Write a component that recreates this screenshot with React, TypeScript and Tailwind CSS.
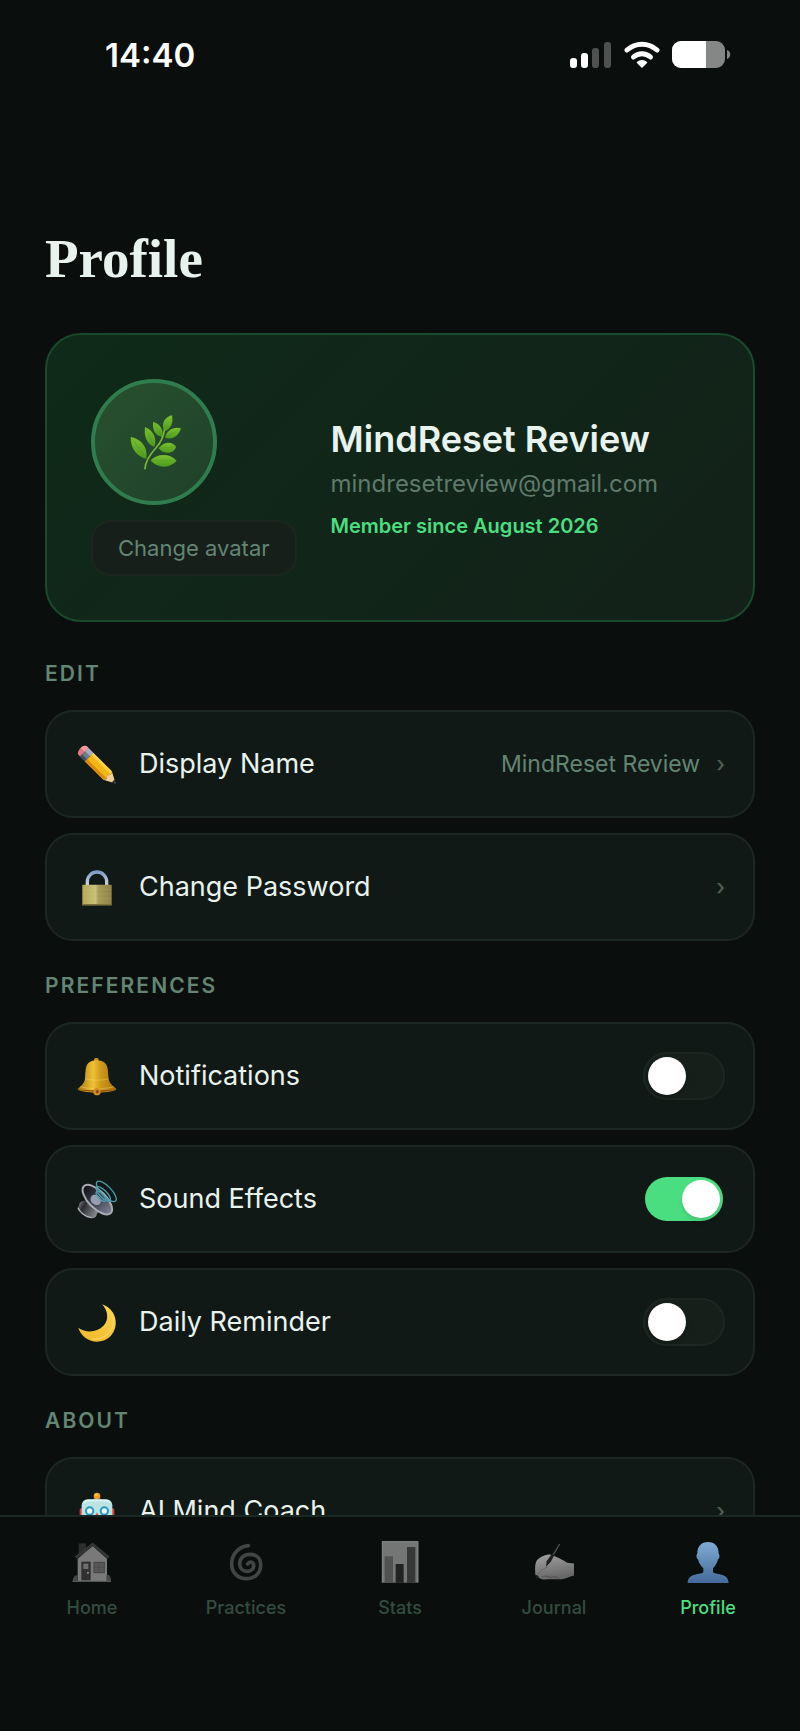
import { useState, type ReactNode } from 'react'

function StatusBar() {
  return (
    <header className="flex h-[109px] items-center justify-between pl-[105px] pr-[69px]">
      <time className="text-[33px] font-semibold leading-10 text-white">14:40</time>
      <div className="flex items-center gap-3">
        <svg className="h-7 w-[42px]" viewBox="0 0 42 28" fill="#fff" aria-label="Signal">
          <rect x="0" y="17" width="7" height="10" rx="3" />
          <rect x="11" y="12" width="7" height="15" rx="3" />
          <rect x="22" y="7" width="7" height="20" rx="3" opacity="0.28" />
          <rect x="34" y="1" width="7" height="26" rx="3" opacity="0.28" />
        </svg>
        <svg className="h-7 w-9" viewBox="0 0 36 28" fill="none" stroke="#fff" strokeLinecap="round" aria-label="Wi-Fi">
          <path d="M3 9C11.500 1.200 24.500 1.200 33 9" strokeWidth="5" />
          <path d="M9.500 16C14.500 11.500 21.500 11.500 26.500 16" strokeWidth="5" />
          <path d="M18 26L13.500 21.500C16 19 20 19 22.500 21.500Z" fill="#fff" strokeWidth="1.500" strokeLinejoin="round" />
        </svg>
        <svg className="h-7 w-[59px]" viewBox="0 0 59 28" aria-label="Battery">
          <clipPath id="battery">
            <rect x="0" y="0" width="53" height="27" rx="9" />
          </clipPath>
          <g clipPath="url(#battery)">
            <rect width="53" height="27" fill="#858786" />
            <rect width="34" height="27" fill="#fff" />
          </g>
          <path d="M55 9C59.300 10 59.300 17 55 18Z" fill="#858786" />
        </svg>
      </div>
    </header>
  )
}

function HerbIcon() {
  return (
    <svg className="ml-1 h-14 w-[52px]" viewBox="0 0 156 166" aria-hidden="true">
      <defs>
        <linearGradient id="leaf" x1="0" y1="0" x2="0" y2="1">
          <stop offset="0" stopColor="#7cc22f" />
          <stop offset="1" stopColor="#4b9a1d" />
        </linearGradient>
      </defs>
      <g fill="url(#leaf)">
        <path d="M2 68C25 72 55 90 49 134C20 125 2 105 2 68Z" />
        <path d="M45 38C70 48 82 72 73 98C48 88 42 65 45 38Z" />
        <path d="M70 22C92 30 102 48 96 67C72 62 66 42 70 22Z" />
        <path d="M126 3C104 8 92 28 103 52C126 42 130 22 126 3Z" />
        <path d="M153 42C130 36 110 48 105 70C128 78 145 66 153 42Z" />
        <path d="M138 98C130 82 104 78 86 102C100 120 130 122 138 98Z" />
        <path d="M140 139C118 115 80 118 62 138C80 160 115 166 140 139Z" />
      </g>
      <path d="M45 163C46 140 60 120 80 98C92 84 100 70 103 48" fill="none" stroke="#79b83c" strokeWidth="5" strokeLinecap="round" />
      <path d="M6 72L48 132M47 42L72 94M72 26L95 64M64 138H132M88 102L132 98M108 68L148 45" stroke="#478f20" strokeWidth="1.500" opacity="0.6" />
    </svg>
  )
}

function PencilIcon() {
  return (
    <svg className="size-10" viewBox="0 0 120 120" aria-hidden="true">
      <g transform="translate(19 22) rotate(45)">
        <path d="M4 -18H-2C-16 -18 -16 18 -2 18H4Z" fill="#e8757f" />
        <path d="M4 -18H-2C-10 -18 -13 -8 -13 -2H4Z" fill="#f59aa2" />
        <rect x="4" y="-18" width="21" height="36" fill="#6f7d8c" />
        <rect x="4" y="-18" width="21" height="14" fill="#a3b0bd" />
        <rect x="4" y="9" width="21" height="9" fill="#454f5a" />
        <path d="M25 -18H103L108 -9L101 0L108 9L103 18H25Z" fill="#f3b614" />
        <path d="M25 -18H103L107 -9H25Z" fill="#fbd04b" />
        <path d="M25 8H107L103 18H25Z" fill="#d88a0c" />
        <path d="M103 -18L137 0L103 18L108 9L101 0L108 -9Z" fill="#f1cf98" />
        <path d="M126 -6L139 0L126 6Z" fill="#2e3338" />
      </g>
    </svg>
  )
}

function LockIcon() {
  return (
    <svg className="size-10" viewBox="0 0 120 120" aria-hidden="true">
      <defs>
        <linearGradient id="brass" x1="0" y1="0" x2="1" y2="0">
          <stop offset="0" stopColor="#b3a858" />
          <stop offset="0.450" stopColor="#c9c07a" />
          <stop offset="0.550" stopColor="#a59a58" />
          <stop offset="1" stopColor="#8f8444" />
        </linearGradient>
        <linearGradient id="shackle" x1="0" y1="0" x2="0" y2="1">
          <stop offset="0" stopColor="#7f9cc9" />
          <stop offset="1" stopColor="#d6dbe0" />
        </linearGradient>
      </defs>
      <path d="M31 57V44A29 29 0 0 1 89 44V57" fill="none" stroke="url(#shackle)" strokeWidth="10" />
      <rect x="16" y="53" width="88" height="62" rx="2" fill="url(#brass)" />
      <path d="M16 67H104M16 81H104M16 95H104" stroke="#ddd48c" strokeWidth="2" opacity="0.2" />
      <path d="M16 113H104" stroke="#7d7236" strokeWidth="4" />
    </svg>
  )
}

function BellIcon() {
  return (
    <svg className="size-10" viewBox="0 0 120 120" aria-hidden="true">
      <defs>
        <linearGradient id="gold" x1="0" y1="0" x2="1" y2="0">
          <stop offset="0" stopColor="#a9730d" />
          <stop offset="0.400" stopColor="#efc236" />
          <stop offset="0.600" stopColor="#cf981b" />
          <stop offset="1" stopColor="#a9720c" />
        </linearGradient>
      </defs>
      <rect x="51" y="6" width="14" height="12" rx="5" fill="#c9921c" />
      <path d="M24 68C27 40 22 14 59 13C96 14 92 40 95 68C97 84 110 90 118 99C118 105 90 110 60 110C30 110 2 105 2 99C10 90 22 84 24 68Z" fill="url(#gold)" />
      <path d="M25 68C40 74 79 74 94 68M9 92C35 100 85 100 111 92" fill="none" stroke="#f8dc6a" strokeWidth="3" opacity="0.4" />
      <path d="M3 100C30 111 90 111 117 100C100 102 80 103 60 103C40 103 20 102 3 100Z" fill="#93580b" />
      <circle cx="60" cy="107" r="11" fill="#d68b26" />
      <circle cx="61" cy="107" r="5" fill="#8d4d12" />
    </svg>
  )
}

function SpeakerIcon() {
  return (
    <svg className="size-10" viewBox="0 0 120 120" aria-hidden="true">
      <defs>
        <linearGradient id="magnet" x1="0" y1="0" x2="1" y2="0.500">
          <stop offset="0" stopColor="#8e9196" />
          <stop offset="0.350" stopColor="#2a2c30" />
          <stop offset="1" stopColor="#85888d" />
        </linearGradient>
        <linearGradient id="cone" x1="0" y1="0" x2="1" y2="0">
          <stop offset="0" stopColor="#0e1014" />
          <stop offset="0.450" stopColor="#3a3d47" />
          <stop offset="1" stopColor="#7d8294" />
        </linearGradient>
      </defs>
      <path d="M8 72C16 62 28 64 36 70L66 98C56 104 62 112 52 116C36 124 6 104 2 90Z" fill="url(#magnet)" />
      <path d="M3 86C8 99 24 113 44 116" fill="none" stroke="#b0b3b8" strokeWidth="4" />
      <path d="M20 40L32 82L72 104Z" fill="#4c4f55" />
      <g transform="rotate(45 61 62)">
        <ellipse cx="61" cy="62" rx="57" ry="26" fill="url(#cone)" stroke="#a9acb3" strokeWidth="6" />
        <ellipse cx="58" cy="66" rx="17" ry="14" fill="#989eb0" />
      </g>
      <g fill="none" stroke="#4c9cae" strokeWidth="4">
        <ellipse cx="88" cy="37" rx="40" ry="15" transform="rotate(46 88 37)" />
        <ellipse cx="79" cy="45" rx="29" ry="11" transform="rotate(46 79 45)" />
        <ellipse cx="72" cy="52" rx="19" ry="8" transform="rotate(46 72 52)" />
      </g>
    </svg>
  )
}

function MoonIcon() {
  return (
    <svg className="size-10" viewBox="0 0 120 124" aria-hidden="true">
      <defs>
        <linearGradient id="moon" x1="0.700" y1="0" x2="0.300" y2="1">
          <stop offset="0" stopColor="#fbd64c" />
          <stop offset="1" stopColor="#f2b92d" />
        </linearGradient>
      </defs>
      <path d="M76 7C105 17 120 42 118 70C115 102 90 123 60 123C35 123 10 107 2 80C28 98 60 94 80 74C98 56 94 26 76 7Z" fill="url(#moon)" />
      <path d="M112 52C114 92 80 119 44 114" fill="none" stroke="#fde58a" strokeWidth="4" opacity="0.5" />
    </svg>
  )
}

function RobotIcon() {
  return (
    <svg className="size-10" viewBox="0 0 120 120" aria-hidden="true">
      <rect x="8" y="52" width="12" height="30" rx="5" fill="#d8413b" />
      <rect x="100" y="52" width="12" height="30" rx="5" fill="#d8413b" />
      <path d="M48 22H72L69 30H51Z" fill="#5d4a8c" />
      <circle cx="60" cy="15" r="10" fill="#f39a1f" />
      <circle cx="58" cy="12" r="4" fill="#fcc65a" />
      <rect x="14" y="25" width="92" height="90" rx="18" fill="#b9e4e2" />
      <path d="M20 36C24 28 32 28 60 28S96 28 100 36" fill="none" stroke="#def5f2" strokeWidth="5" />
      <circle cx="38" cy="60" r="14" fill="#2a96c6" />
      <circle cx="82" cy="60" r="14" fill="#2a96c6" />
      <circle cx="38" cy="60" r="8" fill="#e9fbff" />
      <circle cx="82" cy="60" r="8" fill="#e9fbff" />
      <path d="M60 64L68 80H52Z" fill="#e0504a" />
      <rect x="34" y="90" width="52" height="12" rx="4" fill="#4b5a63" />
    </svg>
  )
}

function HouseIcon() {
  return (
    <svg className="size-10" viewBox="0 0 120 120" aria-hidden="true">
      <rect x="20" y="4" width="22" height="34" fill="#2c2e2e" />
      <path d="M17 50L62 12L105 50V118H17Z" fill="#797979" />
      <path d="M11 47L62 7L110 47" fill="none" stroke="#343636" strokeWidth="9" />
      <rect x="28" y="59" width="28" height="56" fill="#303030" />
      <rect x="34" y="65" width="15" height="16" fill="#707070" />
      <circle cx="48" cy="92" r="3" fill="#999" />
      <rect x="66" y="61" width="31" height="31" fill="#585858" stroke="#444" strokeWidth="3" />
      <path d="M81 61V92M66 76H97" stroke="#484848" strokeWidth="2" />
      <path d="M2 119C2 108 8 98 17 100V119ZM103 119V98C112 96 118 106 117 119Z" fill="#464848" />
      <path d="M2 118H117" stroke="#606060" strokeWidth="3" />
    </svg>
  )
}

function SpiralIcon() {
  return (
    <svg className="size-10" viewBox="0 0 120 120" aria-hidden="true">
      <path
        d="M67 11C38 14 17 36 17 66C17 94 38 110 62 110C88 110 104 92 104 68C104 48 90 37 72 37C52 37 41 50 41 66C41 80 52 88 64 88C76 88 84 80 83 69C82 60 71 57 65 66"
        fill="none"
        stroke="#434544"
        strokeWidth="11"
        strokeLinecap="round"
      />
    </svg>
  )
}

function ChartIcon() {
  return (
    <svg className="size-[42px]" viewBox="0 0 126 126" aria-hidden="true">
      <rect x="9" y="1" width="108" height="124" fill="#747675" />
      <path d="M10 1V125M117 1V125M9 2H117" stroke="#868887" strokeWidth="3" />
      <rect x="17" y="46" width="25" height="79" fill="#505251" />
      <rect x="50" y="69" width="24" height="56" fill="#202322" />
      <rect x="84" y="18" width="25" height="107" fill="#353837" />
    </svg>
  )
}

function WritingHandIcon() {
  return (
    <svg className="size-10" viewBox="0 0 120 120" aria-hidden="true">
      <defs>
        <linearGradient id="hand" x1="0" y1="0" x2="0.300" y2="1">
          <stop offset="0" stopColor="#a2a2a2" />
          <stop offset="1" stopColor="#686868" />
        </linearGradient>
      </defs>
      <path
        d="M4 98C3 84 2 66 8 56C18 44 38 36 50 38C64 42 88 54 100 62L121 65V100C106 104 94 110 82 112L40 112C28 114 16 110 12 104Z"
        fill="url(#hand)"
      />
      <path d="M12 96C18 86 30 82 40 74" fill="none" stroke="#666" strokeWidth="3" />
      <path d="M24 106C34 100 44 103 50 107C58 101 66 104 74 109" fill="none" stroke="#505050" strokeWidth="3" />
      <path d="M75 5L79 7L50 60L36 74L38 58Z" fill="#202222" />
      <path d="M77 6L58 38" stroke="#777" strokeWidth="2" />
      <path d="M4 98L14 102L8 116Z" fill="#1b1d1c" />
    </svg>
  )
}

function PersonIcon() {
  return (
    <svg className="size-[42px]" viewBox="0 0 126 126" aria-hidden="true">
      <defs>
        <linearGradient id="person" x1="0" y1="0" x2="0" y2="1">
          <stop offset="0" stopColor="#7eabd3" />
          <stop offset="1" stopColor="#446a9a" />
        </linearGradient>
      </defs>
      <path
        d="M63 3C83 3 96 17 95 38C99 41 98 52 93 55C90 68 84 76 78 82V92C82 104 124 92 125 126H2C3 92 45 104 49 92V82C42 76 36 68 33 55C28 52 27 41 31 38C30 17 43 3 63 3Z"
        fill="url(#person)"
      />
    </svg>
  )
}

const rowClass =
  'flex h-[108px] w-full items-center rounded-[28px] border-2 border-[#1c2623] bg-[#111916] pl-[30px] pr-7 text-left'

function RowLabel({ icon, label }: { icon: ReactNode; label: string }) {
  return (
    <>
      {icon}
      <span className="ml-[22px] flex-1 text-[27px] leading-9 text-[#e8f3ed]">{label}</span>
    </>
  )
}

function LinkRow({ icon, label, value }: { icon: ReactNode; label: string; value?: string }) {
  return (
    <button type="button" className={rowClass}>
      <RowLabel icon={icon} label={label} />
      {value && <span className="text-[23px] leading-8 text-[#648573]">{value}</span>}
      <span className="ml-4 text-[22px] font-medium leading-8 text-[#4d5f55]" aria-hidden="true">
        ›
      </span>
    </button>
  )
}

function ToggleRow({ icon, label, initial = false }: { icon: ReactNode; label: string; initial?: boolean }) {
  const [on, setOn] = useState(initial)
  return (
    <label className={rowClass}>
      <RowLabel icon={icon} label={label} />
      <input
        type="checkbox"
        role="switch"
        checked={on}
        onChange={(e) => setOn(e.target.checked)}
        className="flex h-12 w-[82px] shrink-0 appearance-none items-center rounded-full border-2 border-[#1d2721] bg-[#161f19] bg-clip-padding px-[3px] before:size-[38px] before:rounded-full before:bg-white before:shadow-md before:content-[''] checked:justify-end checked:border-transparent checked:bg-[#4ade80]"
      />
    </label>
  )
}

function Section({ title, children }: { title: string; children: ReactNode }) {
  return (
    <section className="mt-[31px]">
      <h2 className="mb-[22px] text-[21px] font-semibold uppercase leading-7 tracking-widest text-[#648573]">{title}</h2>
      <div className="flex flex-col gap-[15px]">{children}</div>
    </section>
  )
}

const tabs = [
  { label: 'Home', icon: <HouseIcon /> },
  { label: 'Practices', icon: <SpiralIcon /> },
  { label: 'Stats', icon: <ChartIcon /> },
  { label: 'Journal', icon: <WritingHandIcon /> },
  { label: 'Profile', icon: <PersonIcon />, active: true },
]

function TabBar() {
  return (
    <nav className="flex shrink-0 border-t-2 border-[#1a2823] bg-[#0a0f0d] px-[15px] pb-[111px] pt-[23px]">
      {tabs.map((tab) => (
        <a
          key={tab.label}
          href={`#${tab.label.toLowerCase()}`}
          aria-current={tab.active ? 'page' : undefined}
          className={
            tab.active
              ? 'flex flex-1 flex-col items-center text-lg font-medium leading-6 text-[#4ade80]'
              : 'flex flex-1 flex-col items-center text-lg font-medium leading-6 text-[#344c40]'
          }
        >
          <span className="mb-3 flex h-11 items-center">{tab.icon}</span>
          {tab.label}
        </a>
      ))}
    </nav>
  )
}

export default function App() {
  return (
    <div className="flex h-screen flex-col bg-[#0a0f0d] font-['Inter',sans-serif]">
      <div className="min-h-0 flex-1 overflow-y-auto [scrollbar-width:none]">
        <StatusBar />
        <main className="px-[45px] pb-8 pt-[118px]">
          <h1 className="mb-[42px] font-['Liberation_Serif',serif] text-[55px] font-bold leading-[64px] text-[#e8f3ed]">
            Profile
          </h1>

          <div className="mb-[38px] flex items-center gap-[34px] rounded-[36px] border-2 border-[#1a4a2b] bg-linear-135 from-[#0e2a18] to-[#132119] p-11">
            <div className="flex shrink-0 flex-col items-start gap-[15px]">
              <div className="flex size-[126px] items-center justify-center rounded-full border-4 border-[#2f7d4e] bg-linear-135 from-[#28512f] to-[#1f4029]">
                <HerbIcon />
              </div>
              <button
                type="button"
                className="h-14 rounded-[20px] border-2 border-[#1c261f] bg-[#161f1a] px-[25px] text-[22px] leading-8 text-[#648573]"
              >
                Change avatar
              </button>
            </div>
            <div className="min-w-0">
              <p className="text-[36px] font-semibold leading-[46px] text-[#e8f3ed]">MindReset Review</p>
              <p className="mt-[6px] text-[24px] leading-8 text-[#5e7a6a]">mindresetreview@gmail.com</p>
              <p className="mt-3 text-[20px] font-semibold leading-7 text-[#4ade80]">Member since August 2026</p>
            </div>
          </div>

          <Section title="Edit">
            <LinkRow icon={<PencilIcon />} label="Display Name" value="MindReset Review" />
            <LinkRow icon={<LockIcon />} label="Change Password" />
          </Section>
          <Section title="Preferences">
            <ToggleRow icon={<BellIcon />} label="Notifications" />
            <ToggleRow icon={<SpeakerIcon />} label="Sound Effects" initial />
            <ToggleRow icon={<MoonIcon />} label="Daily Reminder" />
          </Section>
          <Section title="About">
            <LinkRow icon={<RobotIcon />} label="AI Mind Coach" />
          </Section>
        </main>
      </div>
      <TabBar />
    </div>
  )
}
